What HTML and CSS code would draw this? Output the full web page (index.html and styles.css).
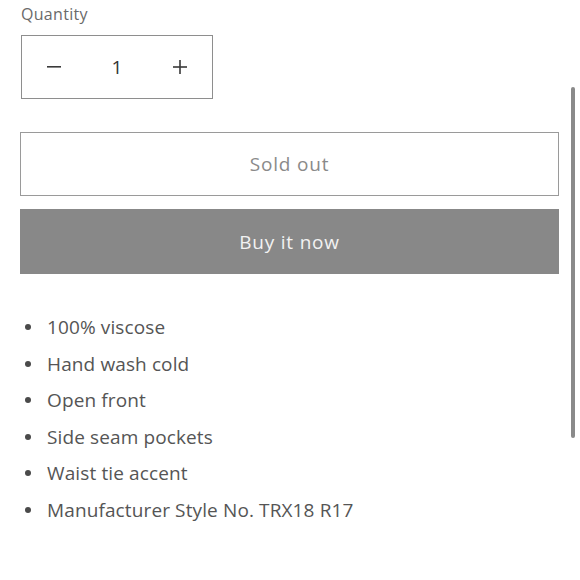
FILE: index.html
```html
<!DOCTYPE html>
<html>
<head>
<meta charset="utf-8">
<link rel="stylesheet" href="styles.css">
</head>
<body>
<div class="page">
  <div class="qty-label">Quantity</div>
  <div class="qty">
    <button class="qty-btn" aria-label="Decrease">
      <svg width="14" height="2" viewBox="0 0 14 2"><rect x="0" y="0" width="14" height="1.6" fill="#3a3a3a"/></svg>
    </button>
    <div class="qty-val">1</div>
    <button class="qty-btn" aria-label="Increase">
      <svg width="14" height="14" viewBox="0 0 14 14"><rect x="0" y="6.2" width="14" height="1.6" fill="#3a3a3a"/><rect x="6.2" y="0" width="1.6" height="14" fill="#3a3a3a"/></svg>
    </button>
  </div>
  <button class="btn btn-sold">Sold out</button>
  <button class="btn btn-buy">Buy it now</button>
  <ul class="features">
    <li>100% viscose</li>
    <li>Hand wash cold</li>
    <li>Open front</li>
    <li>Side seam pockets</li>
    <li>Waist tie accent</li>
    <li>Manufacturer Style No. TRX18 R17</li>
  </ul>
</div>
<div class="scroll-thumb"></div>
</body>
</html>
```
FILE: styles.css
```css
html, body {
  margin: 0;
  padding: 0;
  background: #fff;
}
body {
  font-family: "Open Sans", "Noto Sans", sans-serif;
  color: #555;
  width: 580px;
  height: 580px;
  overflow: hidden;
  position: relative;
}
.page {
  padding: 2px 21px 0 20px;
  display: flex;
  flex-direction: column;
}
.qty-label {
  font-size: 16px;
  line-height: 24px;
  color: #6a6a6a;
  letter-spacing: 0.3px;
  margin-left: 1px;
}
.qty {
  margin-top: 9px;
  margin-left: 1px;
  width: 192px;
  height: 64px;
  box-sizing: border-box;
  border: 1px solid #8e8e8e;
  display: grid;
  grid-template-columns: 64px 1fr 64px;
  align-items: center;
}
.qty-btn {
  background: none;
  border: 0;
  padding: 0;
  height: 100%;
  display: flex;
  align-items: center;
  justify-content: center;
}
.qty-val {
  text-align: center;
  font-size: 19px;
  color: #333;
}
.btn {
  font-family: inherit;
  width: 539px;
  box-sizing: border-box;
  font-size: 19px;
  letter-spacing: 0.8px;
  cursor: pointer;
}
.btn-sold {
  margin-top: 33px;
  height: 64px;
  background: #fff;
  border: 1px solid #9a9a9a;
  color: #8a8a8a;
}
.btn-buy {
  margin-top: 13px;
  height: 65px;
  background: #888;
  border: 0;
  color: #f2f2f2;
}
.features {
  margin: 35px 0 0;
  padding: 0 0 0 27px;
  list-style: none;
  font-size: 19px;
  line-height: 36.6px;
  letter-spacing: 0.12px;
  color: #555;
}
.features li {
  position: relative;
}
.features li::before {
  content: "";
  position: absolute;
  left: -22px;
  top: 15px;
  width: 6px;
  height: 6px;
  border-radius: 50%;
  background: #4a4a4a;
}
.scroll-thumb {
  position: absolute;
  left: 571px;
  top: 87px;
  width: 4px;
  height: 351px;
  border-radius: 2px;
  background: #8a8a8a;
}
```
